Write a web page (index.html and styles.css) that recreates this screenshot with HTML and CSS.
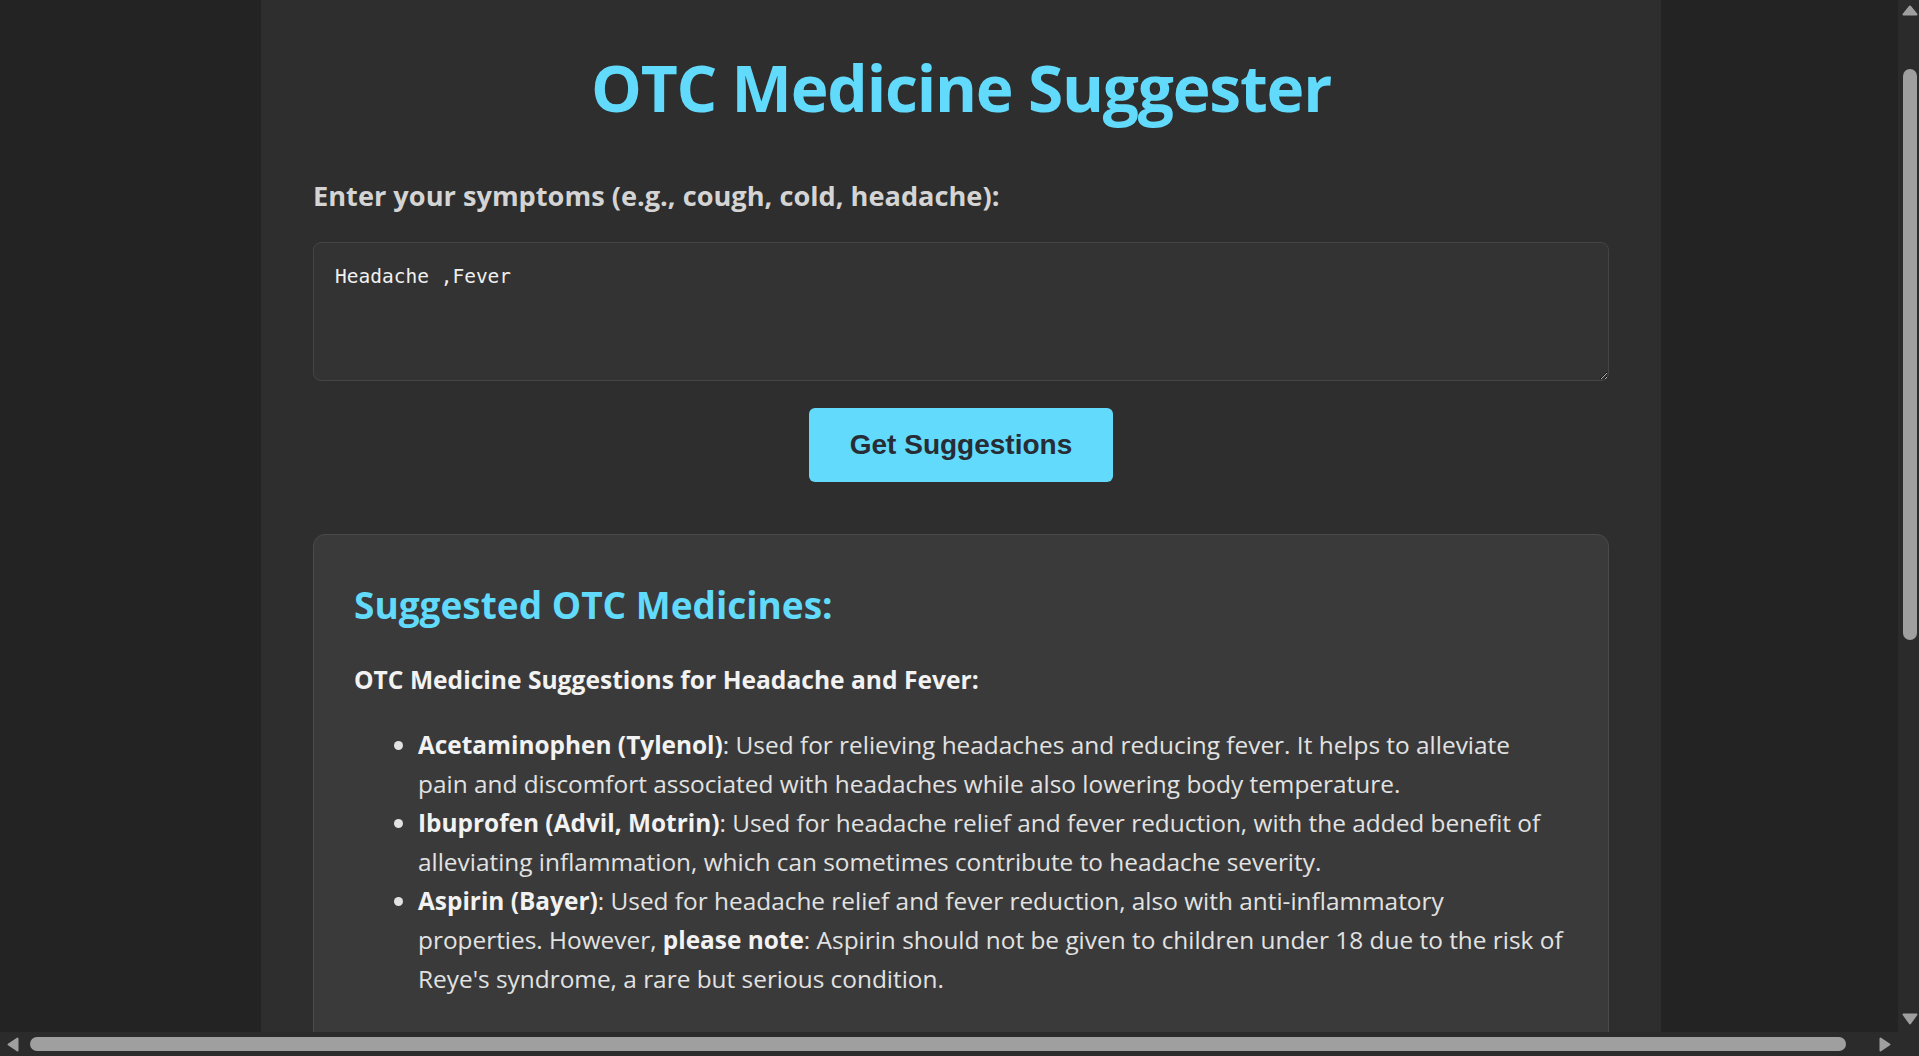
FILE: index.html
```html
<!DOCTYPE html>
<html lang="en">
<head>
<meta charset="utf-8">
<title>OTC Medicine Suggester</title>
<link rel="stylesheet" href="styles.css">
</head>
<body>
<div class="container">
  <h1 class="title">OTC Medicine Suggester</h1>
  <label class="field-label" for="symptoms">Enter your symptoms (e.g., cough, cold, headache):</label>
  <textarea id="symptoms" class="symptoms">Headache ,Fever</textarea>
  <button class="submit" type="button">Get Suggestions</button>
  <section class="result">
    <h2 class="result-title">Suggested OTC Medicines:</h2>
    <p class="result-intro"><strong>OTC Medicine Suggestions for Headache and Fever:</strong></p>
    <ul class="result-list">
      <li><strong>Acetaminophen (Tylenol)</strong>: Used for relieving headaches and reducing fever. It helps to alleviate pain and discomfort associated with headaches while also lowering body temperature.</li>
      <li><strong>Ibuprofen (Advil, Motrin)</strong>: Used for headache relief and fever reduction, with the added benefit of alleviating inflammation, which can sometimes contribute to headache severity.</li>
      <li><strong>Aspirin (Bayer)</strong>: Used for headache relief and fever reduction, also with anti-inflammatory properties. However, <strong>please note</strong>: Aspirin should not be given to children under 18 due to the risk of Reye's syndrome, a rare but serious condition.</li>
    </ul>
  </section>
</div>

<div class="scrollbar scrollbar-v" aria-hidden="true">
  <svg class="sb-arrow sb-up" width="16" height="11" viewBox="0 0 16 11"><polygon points="8,1.5 14.5,9.5 1.5,9.5" fill="#9f9f9f" stroke="#9f9f9f" stroke-width="2" stroke-linejoin="round"/></svg>
  <div class="sb-thumb sb-thumb-v"></div>
  <svg class="sb-arrow sb-down" width="16" height="12" viewBox="0 0 16 12"><polygon points="1.5,1.5 14.5,1.5 8,10.5" fill="#9f9f9f" stroke="#9f9f9f" stroke-width="2" stroke-linejoin="round"/></svg>
</div>
<div class="scrollbar scrollbar-h" aria-hidden="true">
  <svg class="sb-arrow sb-left" width="12" height="15" viewBox="0 0 12 15"><polygon points="1.5,7.5 10.5,1.5 10.5,13.5" fill="#9f9f9f" stroke="#9f9f9f" stroke-width="2" stroke-linejoin="round"/></svg>
  <div class="sb-thumb sb-thumb-h"></div>
  <svg class="sb-arrow sb-right" width="12" height="15" viewBox="0 0 12 15"><polygon points="10.5,7.5 1.5,1.5 1.5,13.5" fill="#9f9f9f" stroke="#9f9f9f" stroke-width="2" stroke-linejoin="round"/></svg>
</div>
<div class="scrollbar-corner" aria-hidden="true"></div>
</body>
</html>
```
FILE: styles.css
```css
:root {
  color-scheme: dark;
}
html, body {
  margin: 0;
}
body {
  background: #232323;
  padding: 0 0 0 3px;
  font-family: "Open Sans", "Noto Sans", sans-serif;
  font-size: 24.4px;
  color: #e2e2e2;
  overflow: hidden;
}
.container {
  box-sizing: border-box;
  width: 1400px;
  min-height: 1100px;
  margin: 0 auto;
  padding: 41px 52px 60px;
  background: #2e2e2e;
  display: flex;
  flex-direction: column;
}
.title {
  margin: 7px 0 50px;
  text-align: center;
  color: #61dafb;
  font-size: 64px;
  letter-spacing: -1.2px;
  line-height: 80px;
  font-weight: 700;
}
.field-label {
  display: block;
  margin-bottom: 28px;
  font-size: 27.2px;
  line-height: 36px;
  font-weight: 700;
  color: #d4d4d4;
}
.symptoms {
  box-sizing: border-box;
  width: 100%;
  height: 139px;
  margin: 0;
  padding: 22px 21px;
  background: #333333;
  color: #f0f0f0;
  border: 1px solid #454545;
  border-radius: 8px;
  font-family: "DejaVu Sans Mono", "Liberation Mono", monospace;
  font-size: 19.5px;
  resize: vertical;
}
.submit {
  align-self: center;
  margin: 27px 0 52px;
  padding: 21px 41px;
  background: #61dafb;
  color: #282c34;
  border: none;
  border-radius: 6px;
  font-family: "Liberation Sans", Arial, sans-serif;
  font-weight: 700;
  font-size: 28px;
  line-height: 32px;
}
.result {
  background: #3a3a3a;
  border: 1px solid #4a4a4a;
  border-radius: 12px;
  padding: 44px 40px 60px;
}
.result-title {
  margin: 0 0 29px;
  color: #61dafb;
  font-size: 37px;
  line-height: 52px;
  font-weight: 700;
}
.result-intro {
  margin: 0 0 26px;
  line-height: 39px;
  font-size: 24.6px;
}
.result-list {
  margin: 0;
  padding: 0 4px 0 64px;
  line-height: 39px;
}
.result-list strong, .result-intro strong {
  color: #f2f2f2;
}

/* window scrollbars as seen in the screenshot */
.scrollbar {
  position: fixed;
  background: #2b2b2b;
  z-index: 5;
}
.scrollbar-v {
  top: 0;
  right: 0;
  width: 21px;
  height: 1032px;
}
.scrollbar-h {
  left: 0;
  bottom: 0;
  width: 1898px;
  height: 24px;
}
.scrollbar-corner {
  position: fixed;
  right: 0;
  bottom: 0;
  width: 21px;
  height: 24px;
  background: #2b2b2b;
  z-index: 5;
}
.sb-thumb {
  position: absolute;
  background: #9f9f9f;
  border-radius: 7px;
}
.sb-thumb-v {
  left: 5px;
  top: 69px;
  width: 14px;
  height: 571px;
}
.sb-thumb-h {
  top: 5px;
  left: 30px;
  height: 14px;
  width: 1816px;
}
.sb-arrow {
  position: absolute;
  display: block;
}
.sb-up {
  left: 4px;
  top: 5px;
}
.sb-down {
  left: 4px;
  top: 1013px;
}
.sb-left {
  left: 7px;
  top: 5px;
}
.sb-right {
  left: 1879px;
  top: 5px;
}
```
